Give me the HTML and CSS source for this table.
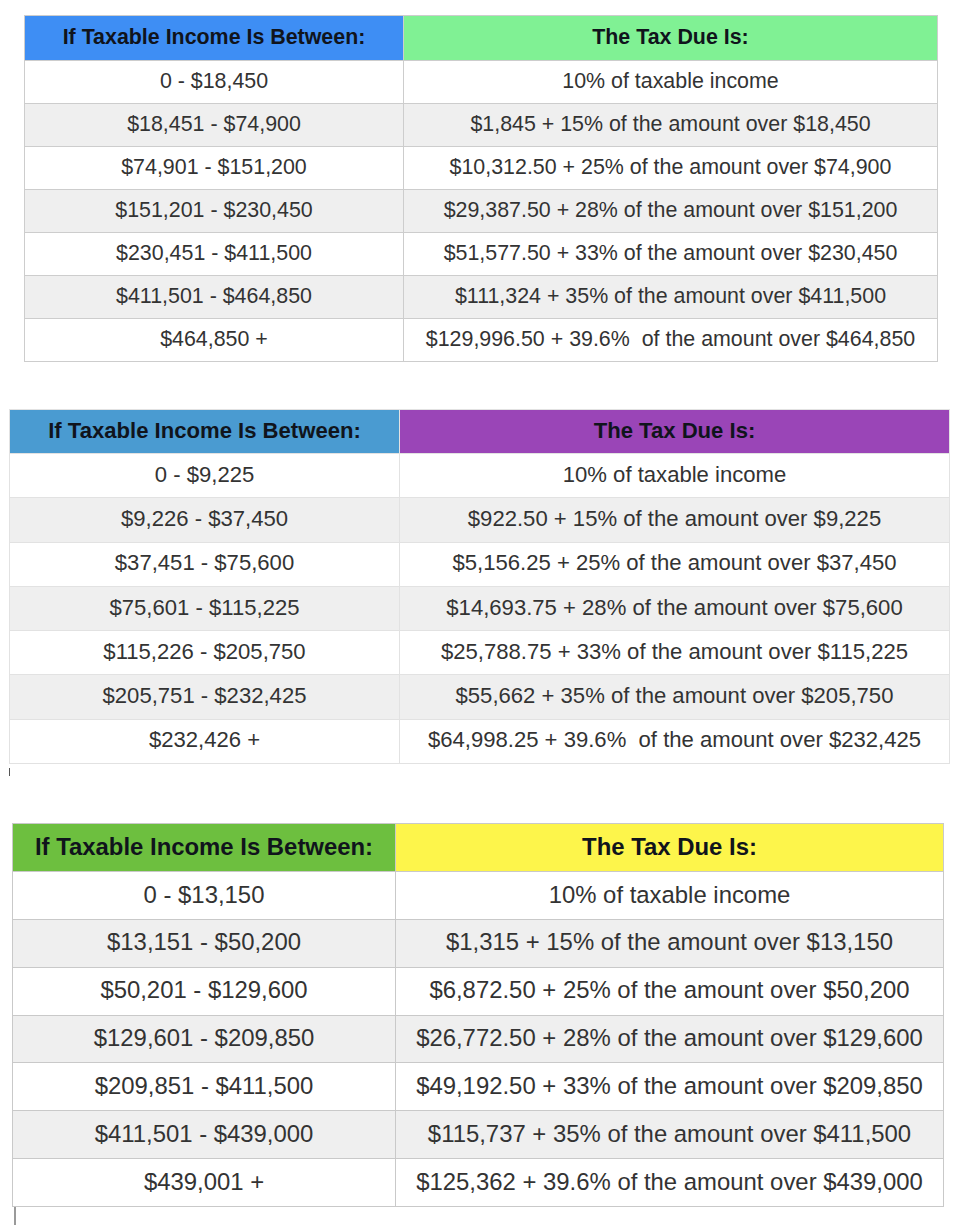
FILE: index.html
```html
<!DOCTYPE html>
<html>
<head>
<meta charset="utf-8">
<link rel="stylesheet" href="styles.css">
</head>
<body>
<div class="tbl t1">
  <div class="cell h h1l">If Taxable Income Is Between:</div>
  <div class="cell h h1r">The Tax Due Is:</div>
  <div class="cell">0 - $18,450</div><div class="cell">10% of taxable income</div>
  <div class="cell s">$18,451 - $74,900</div><div class="cell s">$1,845 + 15% of the amount over $18,450</div>
  <div class="cell">$74,901 - $151,200</div><div class="cell">$10,312.50 + 25% of the amount over $74,900</div>
  <div class="cell s">$151,201 - $230,450</div><div class="cell s">$29,387.50 + 28% of the amount over $151,200</div>
  <div class="cell">$230,451 - $411,500</div><div class="cell">$51,577.50 + 33% of the amount over $230,450</div>
  <div class="cell s">$411,501 - $464,850</div><div class="cell s">$111,324 + 35% of the amount over $411,500</div>
  <div class="cell">$464,850 +</div><div class="cell">$129,996.50 + 39.6%&nbsp; of the amount over $464,850</div>
</div>

<div class="tbl t2">
  <div class="cell h h2l">If Taxable Income Is Between:</div>
  <div class="cell h h2r">The Tax Due Is:</div>
  <div class="cell">0 - $9,225</div><div class="cell">10% of taxable income</div>
  <div class="cell s">$9,226 - $37,450</div><div class="cell s">$922.50 + 15% of the amount over $9,225</div>
  <div class="cell">$37,451 - $75,600</div><div class="cell">$5,156.25 + 25% of the amount over $37,450</div>
  <div class="cell s">$75,601 - $115,225</div><div class="cell s">$14,693.75 + 28% of the amount over $75,600</div>
  <div class="cell">$115,226 - $205,750</div><div class="cell">$25,788.75 + 33% of the amount over $115,225</div>
  <div class="cell s">$205,751 - $232,425</div><div class="cell s">$55,662 + 35% of the amount over $205,750</div>
  <div class="cell">$232,426 +</div><div class="cell">$64,998.25 + 39.6%&nbsp; of the amount over $232,425</div>
</div>
<div class="tick"></div>

<div class="tbl t3">
  <div class="cell h h3l">If Taxable Income Is Between:</div>
  <div class="cell h h3r">The Tax Due Is:</div>
  <div class="cell">0 - $13,150</div><div class="cell">10% of taxable income</div>
  <div class="cell s">$13,151 - $50,200</div><div class="cell s">$1,315 + 15% of the amount over $13,150</div>
  <div class="cell">$50,201 - $129,600</div><div class="cell">$6,872.50 + 25% of the amount over $50,200</div>
  <div class="cell s">$129,601 - $209,850</div><div class="cell s">$26,772.50 + 28% of the amount over $129,600</div>
  <div class="cell">$209,851 - $411,500</div><div class="cell">$49,192.50 + 33% of the amount over $209,850</div>
  <div class="cell s">$411,501 - $439,000</div><div class="cell s">$115,737 + 35% of the amount over $411,500</div>
  <div class="cell">$439,001 +</div><div class="cell">$125,362 + 39.6% of the amount over $439,000</div>
</div>
<div class="tail"></div>
</body>
</html>
```

FILE: styles.css
```css
html, body {
  margin: 0;
  padding: 0;
  background: #ffffff;
}
body {
  padding-top: 15px;
  font-family: "Liberation Sans", Arial, sans-serif;
  color: #333333;
  overflow: hidden;
}
.tbl {
  display: grid;
  gap: 1px;
  padding: 1px;
  box-sizing: border-box;
}
.cell {
  background: #ffffff;
  display: flex;
  align-items: center;
  justify-content: center;
  white-space: nowrap;
  text-align: center;
  padding-bottom: 2px;
  box-sizing: border-box;
}
.cell.s {
  background: #efefef;
}
.cell.h {
  font-weight: bold;
  color: #10141c;
}
.t1 {
  margin-left: 24px;
  width: 914px;
  background: #cdcdcd;
  grid-template-columns: 378px 1fr;
  grid-template-rows: 44px repeat(7, 42px);
  font-size: 21.4px;
}
.t2 {
  margin-top: 47px;
  margin-left: 9px;
  width: 941px;
  background: #e2e2e2;
  grid-template-columns: 389px 1fr;
  grid-template-rows: 43px repeat(7, 43.3px);
  font-size: 22.1px;
}
.t3 {
  margin-top: 47px;
  margin-left: 12px;
  width: 932px;
  background: #c9c9c9;
  grid-template-columns: 382px 1fr;
  grid-template-rows: 47px repeat(7, 46.857px);
  font-size: 23.9px;
}
.h1l { background: #3e8ef4; }
.h1r { background: #80f194; }
.h2l { background: #4a9bd1; }
.h2r { background: #9a45b7; }
.h3l { background: #6dbf3f; }
.h3r { background: #fdf54b; }
.tick {
  margin-top: 4px;
  margin-left: 9px;
  width: 1px;
  height: 8px;
  background: #555555;
}
.tail {
  margin-left: 14px;
  width: 2px;
  height: 30px;
  background: #9a9a9a;
}
```
